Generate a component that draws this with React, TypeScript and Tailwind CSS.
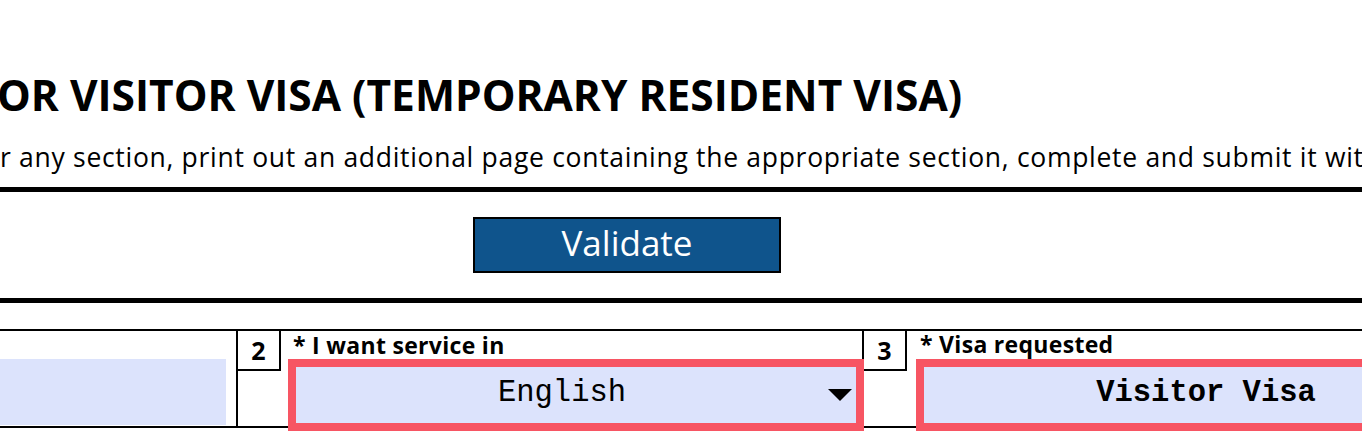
import React from 'react'

const sans = "font-['Open_Sans',sans-serif]"
const mono = "font-['Liberation_Mono','Courier_New',monospace]"

function NumberBox({ n }: { n: string }) {
  return (
    <div className="flex h-[40px] w-[43px] shrink-0 items-center justify-center border-r-2 border-b-2 border-black text-[25px] leading-none font-bold">
      {n}
    </div>
  )
}

function Field({ value, bold, dropdown, className }: { value: string; bold?: boolean; dropdown?: boolean; className: string }) {
  return (
    <div className={`relative flex h-[72px] shrink-0 items-center border-[8px] border-[rgba(255,45,55,0.78)] bg-[#dce3fc] ${className}`}>
      <div className={`${mono} flex-1 pb-[4px] text-center text-[30.5px] leading-none text-black ${bold ? 'font-bold' : ''}`}>
        {value}
      </div>
      {dropdown && (
        <svg width="24" height="12" viewBox="0 0 24 12" className="mr-[4px] shrink-0">
          <path d="M0 0 H24 L12 12 Z" fill="#000" />
        </svg>
      )}
    </div>
  )
}

export default function App() {
  return (
    <div className={`h-[440px] w-[1362px] overflow-hidden bg-white text-black ${sans}`}>
      {/* title, cut off on the left like the pdf viewport */}
      <h1 className="-ml-[3px] pt-[66px] text-[42.5px] leading-[58px] font-bold whitespace-nowrap">
        OR VISITOR VISA (TEMPORARY RESIDENT VISA)
      </h1>
      <p className="mt-[15px] text-[26.5px] leading-[36px] tracking-[0.7px] whitespace-nowrap">
        r any section, print out an additional page containing the appropriate section, complete and submit it with your application.
      </p>

      <div className="mt-[12px] h-[5px] bg-black" />

      <div className="flex h-[106px] items-center pl-[473px]">
        <button className="flex h-[56px] w-[308px] items-center justify-center border-2 border-black bg-[#0f548c] pb-[6px] text-[35px] leading-none text-white">
          Validate
        </button>
      </div>

      <div className="h-[5px] bg-black" />

      {/* section row */}
      <div className="mt-[26px] flex h-[99px] border-y-2 border-black">
        <div className="flex w-[238px] shrink-0 flex-col border-r-2 border-black">
          <div className="mt-[28px] h-[66px] w-[226px] bg-[#dce3fc]" />
        </div>

        <div className="flex w-[626px] shrink-0 flex-col border-r-2 border-black">
          <div className="flex">
            <NumberBox n="2" />
            <div className="pt-[1px] pl-[12px] text-[23px] leading-[26px] tracking-[0.3px] font-bold">* I want service in</div>
          </div>
          <Field value="English" dropdown className="mt-[-12px] ml-[50px] w-[576px]" />
        </div>

        <div className="flex flex-1 flex-col">
          <div className="flex">
            <NumberBox n="3" />
            <div className="pl-[13px] text-[23px] leading-[26px] tracking-[0.3px] font-bold">* Visa requested</div>
          </div>
          <Field value="Visitor Visa" bold className="mt-[-12px] ml-[52px] w-[580px]" />
        </div>
      </div>
    </div>
  )
}
